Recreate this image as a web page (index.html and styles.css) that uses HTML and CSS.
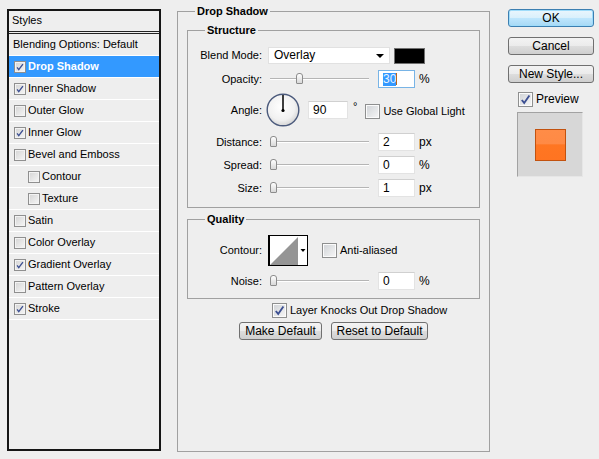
FILE: index.html
```html
<!DOCTYPE html>
<html lang="en">
<head>
    <meta charset="UTF-8">
    <title>Layer Style</title>
    <link rel="stylesheet" href="styles.css">
</head>
<body>
<div class="dialog">
    <div class="styles-panel">
        <div class="styles-head">Styles</div>
        <ul class="style-list">
            <li class="style-item plain">Blending Options: Default</li>
            <li class="style-item selected"><span class="cb on"><svg viewBox="0 0 12 12"><path d="M2.5 6.5l2 2.6 5-6.6"/></svg></span>Drop Shadow</li>
            <li class="style-item"><span class="cb on"><svg viewBox="0 0 12 12"><path d="M2.5 6.5l2 2.6 5-6.6"/></svg></span>Inner Shadow</li>
            <li class="style-item"><span class="cb"></span>Outer Glow</li>
            <li class="style-item"><span class="cb on"><svg viewBox="0 0 12 12"><path d="M2.5 6.5l2 2.6 5-6.6"/></svg></span>Inner Glow</li>
            <li class="style-item"><span class="cb"></span>Bevel and Emboss</li>
            <li class="style-item sub"><span class="cb"></span>Contour</li>
            <li class="style-item sub"><span class="cb"></span>Texture</li>
            <li class="style-item"><span class="cb"></span>Satin</li>
            <li class="style-item"><span class="cb"></span>Color Overlay</li>
            <li class="style-item"><span class="cb on"><svg viewBox="0 0 12 12"><path d="M2.5 6.5l2 2.6 5-6.6"/></svg></span>Gradient Overlay</li>
            <li class="style-item"><span class="cb"></span>Pattern Overlay</li>
            <li class="style-item"><span class="cb on"><svg viewBox="0 0 12 12"><path d="M2.5 6.5l2 2.6 5-6.6"/></svg></span>Stroke</li>
        </ul>
    </div>

    <fieldset class="effect">
        <legend>Drop Shadow</legend>

        <fieldset class="group structure">
            <legend>Structure</legend>
            <div class="row blend-row">
                <span class="lbl">Blend Mode:</span>
                <div class="select"><span>Overlay</span><span class="arrow"></span></div>
                <span class="swatch"></span>
            </div>
            <div class="row field-row">
                <span class="lbl">Opacity:</span>
                <div class="slider"><span class="thumb" style="left:26px"></span></div>
                <span class="num focus"><span class="sel">30</span><span class="caret"></span></span>
                <span class="unit">%</span>
            </div>
            <div class="row angle-row">
                <span class="lbl">Angle:</span>
                <svg class="dial" width="34" height="34" viewBox="0 0 34 34">
                    <defs>
                        <radialGradient id="dialFill" cx="0.45" cy="0.4" r="0.6">
                            <stop offset="0" stop-color="#ffffff"/>
                            <stop offset="0.7" stop-color="#f1f1f1"/>
                            <stop offset="1" stop-color="#d6d6d6"/>
                        </radialGradient>
                    </defs>
                    <circle cx="17" cy="17" r="15.8" fill="url(#dialFill)" stroke="#4b5a7c" stroke-width="1.4"/>
                    <line x1="17" y1="17.5" x2="17" y2="2" stroke="#000" stroke-width="1.5"/>
                    <circle cx="17" cy="17.5" r="1.6" fill="#000"/>
                </svg>
                <span class="num wide">90</span>
                <span class="deg">°</span>
                <label class="check global"><span class="cb big"></span>Use Global Light</label>
            </div>
            <div class="row field-row first-px">
                <span class="lbl">Distance:</span>
                <div class="slider"><span class="thumb" style="left:0"></span></div>
                <span class="num">2</span>
                <span class="unit">px</span>
            </div>
            <div class="row field-row">
                <span class="lbl">Spread:</span>
                <div class="slider"><span class="thumb" style="left:0"></span></div>
                <span class="num">0</span>
                <span class="unit">%</span>
            </div>
            <div class="row field-row">
                <span class="lbl">Size:</span>
                <div class="slider"><span class="thumb" style="left:0"></span></div>
                <span class="num">1</span>
                <span class="unit">px</span>
            </div>
        </fieldset>

        <fieldset class="group quality">
            <legend>Quality</legend>
            <div class="row contour-row">
                <span class="lbl">Contour:</span>
                <svg class="contour" width="40" height="31" viewBox="0 0 40 31">
                    <rect x="0.5" y="0.5" width="39" height="30" fill="#fff" stroke="#000"/>
                    <rect x="1" y="1" width="1" height="29" fill="#000"/>
                    <polygon points="2,30 30,2 30,30" fill="#959595"/>
                    <path d="M32.5 14h5l-2.5 3z" fill="#000"/>
                </svg>
                <label class="check aa"><span class="cb big"></span>Anti-aliased</label>
            </div>
            <div class="row field-row noise-row">
                <span class="lbl">Noise:</span>
                <div class="slider"><span class="thumb" style="left:0"></span></div>
                <span class="num">0</span>
                <span class="unit">%</span>
            </div>
        </fieldset>

        <label class="check knock"><span class="cb big on"><svg viewBox="0 0 14 14"><path d="M3 7.5l2.6 3.2 5.6-8"/></svg></span>Layer Knocks Out Drop Shadow</label>

        <div class="defaults">
            <button class="btn make">Make Default</button>
            <button class="btn reset">Reset to Default</button>
        </div>
    </fieldset>

    <div class="actions">
        <button class="btn default">OK</button>
        <button class="btn">Cancel</button>
        <button class="btn">New Style...</button>
        <label class="check preview-check"><span class="cb big on"><svg viewBox="0 0 14 14"><path d="M3 7.5l2.6 3.2 5.6-8"/></svg></span>Preview</label>
        <div class="preview">
            <span class="preview-swatch"></span>
        </div>
    </div>
</div>
</body>
</html>
```

FILE: styles.css
```css
body {
    margin: 0;
    background: #eeeeee;
    font-family: 'Liberation Sans', Arial, sans-serif;
    font-size: 11px;
    line-height: 13px;
    color: #000;
}

.dialog {
    display: flex;
    align-items: flex-start;
    width: 599px;
    height: 459px;
    overflow: hidden;
}

/* left list */

.styles-panel {
    box-sizing: border-box;
    width: 154px;
    height: 442px;
    margin: 9px 0 0 7px;
    border: 2px solid #151515;
}

.styles-head {
    height: 20px;
    line-height: 19px;
    padding-left: 3px;
    border-bottom: 3px double #222;
}

.style-list {
    list-style: none;
    margin: 0;
    padding: 0;
}

.style-item {
    display: flex;
    align-items: center;
    height: 21px;
    padding-left: 5px;
    border-bottom: 1px solid #fff;
    white-space: nowrap;
}

.style-item.plain {
    padding-left: 4px;
}

.style-item.sub {
    padding-left: 19px;
}

.style-item.selected {
    background: #3399ff;
    color: #fff;
    font-weight: bold;
}

/* checkboxes */

.cb {
    box-sizing: border-box;
    flex: none;
    width: 12px;
    height: 12px;
    margin-right: 2px;
    border: 1px solid #8f8f8f;
    background: linear-gradient(135deg, #d4d4d4, #f6f6f6);
    box-shadow: inset 0 0 0 1px #f3f3f3;
}

.cb svg {
    display: block;
    width: 100%;
    height: 100%;
    fill: none;
    stroke: #3c4f92;
    stroke-width: 1.6;
}

.cb.big {
    width: 15px;
    height: 15px;
    margin-right: 3px;
    border-color: #8e8f8f;
    background: linear-gradient(135deg, #cfd2d6, #f7f7f7);
    box-shadow: inset 0 0 0 1px #fbfbfb;
}

.cb.big svg {
    stroke-width: 2;
}

.check {
    display: flex;
    align-items: center;
    white-space: nowrap;
}

/* group boxes */

fieldset {
    min-width: 0;
    margin: 0;
    border: 1px solid #a0a0a0;
}

legend {
    padding: 0 2px;
    font-weight: bold;
    line-height: 13px;
}

.effect {
    box-sizing: border-box;
    flex: none;
    width: 313px;
    height: 447px;
    margin: 5px 0 0 16px;
    padding: 6px 9px 0;
}

.effect > legend {
    margin-left: 8px;
}

.group {
    padding: 10px 0 10px;
}

.group > legend {
    margin-left: 17px;
}

.quality {
    margin-top: 5px;
    padding: 9px 0 8px;
}

.row {
    display: flex;
    align-items: center;
    white-space: nowrap;
}

.lbl {
    flex: none;
    width: 74px;
    margin-right: 6px;
    text-align: right;
}

.blend-row {
    height: 17px;
}

.field-row {
    height: 18px;
    margin-top: 5px;
}

.blend-row + .field-row {
    margin-top: 6px;
}

.angle-row {
    height: 34px;
    margin-top: 5px;
}

.first-px {
    margin-top: 6px;
}

.contour-row {
    height: 31px;
}

.noise-row {
    margin-top: 6px;
}

.select {
    box-sizing: border-box;
    display: flex;
    align-items: center;
    justify-content: space-between;
    width: 122px;
    height: 17px;
    padding: 0 5px 0 5px;
    background: #fff;
    border: 1px solid #e1e1e1;
    font-size: 12px;
}

.arrow {
    width: 0;
    height: 0;
    border-left: 4px solid transparent;
    border-right: 4px solid transparent;
    border-top: 4px solid #000;
}

.swatch {
    box-sizing: border-box;
    width: 31px;
    height: 16px;
    margin-left: 4px;
    background: #000;
    border: 1px solid #707070;
}

.slider {
    position: relative;
    flex: none;
    width: 99px;
    height: 12px;
    margin-left: 2px;
}

.slider::before {
    content: "";
    position: absolute;
    left: 0;
    right: 0;
    top: 5px;
    height: 1px;
    background: #b5b5b5;
    border-bottom: 1px solid #fff;
}

.thumb {
    position: absolute;
    top: 0;
    box-sizing: border-box;
    width: 7px;
    height: 11px;
    border: 1px solid #8c8c8c;
    border-radius: 3px 3px 1px 1px;
    background: linear-gradient(#ffffff, #d8d8d8);
}

.num {
    box-sizing: border-box;
    display: flex;
    align-items: center;
    flex: none;
    width: 37px;
    height: 18px;
    margin-left: 9px;
    padding-left: 4px;
    background: #fff;
    border: 1px solid #e3e3e3;
    border-top-color: #d0d0d0;
    font-size: 12px;
}

.num.focus {
    border-color: #78b4e6;
}

.sel {
    background: #3399ff;
    color: #e8f4ff;
}

.caret {
    width: 1px;
    height: 12px;
    background: #b8661a;
}

.num.wide {
    width: 40px;
    margin-left: 8px;
}

.unit {
    margin-left: 4px;
    font-size: 12px;
}

.dial {
    flex: none;
    margin-left: -2px;
}

.deg {
    align-self: flex-start;
    margin: 7px 0 0 5px;
}

.global {
    margin-left: 8px;
    padding-top: 2px;
}

.contour {
    flex: none;
}

.aa {
    margin-left: 14px;
}

.knock {
    height: 15px;
    margin-top: 4px;
    padding-left: 85px;
}

.defaults {
    display: flex;
    justify-content: center;
    gap: 9px;
    margin-top: 4px;
}

/* buttons */

.btn {
    box-sizing: border-box;
    height: 18px;
    padding: 0;
    font-family: inherit;
    font-size: 12px;
    color: #000;
    border: 1px solid #707070;
    border-radius: 3px;
    background: linear-gradient(#f3f3f3 0%, #ebebeb 50%, #dddddd 51%, #cfcfcf 100%);
}

.make {
    width: 83px;
}

.reset {
    width: 97px;
}

.actions {
    display: flex;
    flex-direction: column;
    width: 86px;
    margin: 9px 0 0 18px;
}

.actions .btn {
    width: 86px;
}

.actions .btn + .btn {
    margin-top: 10px;
}

.btn.default {
    border-color: #3c7fb1;
    background: linear-gradient(#eaf6fd 0%, #d9f0fc 50%, #bee6fd 51%, #a7d9f5 100%);
    box-shadow: inset 0 0 0 1px #9fdcfa;
}

.preview-check {
    height: 15px;
    margin-top: 9px;
    padding-left: 10px;
    font-size: 12px;
}

.preview {
    box-sizing: border-box;
    display: flex;
    align-items: center;
    justify-content: center;
    width: 66px;
    height: 65px;
    margin: 5px 0 0 9px;
    background: #d7d7d7;
    border-left: 1px solid #a2a2a2;
    border-top: 1px solid #a2a2a2;
    border-right: 1px solid #e6e6e6;
    border-bottom: 1px solid #e6e6e6;
}

.preview-swatch {
    box-sizing: border-box;
    width: 31px;
    height: 32px;
    border: 1px solid #c2520f;
    background: linear-gradient(#ff8c47 0%, #ff8a45 45%, #ff7622 50%, #ff7421 100%);
}
```
